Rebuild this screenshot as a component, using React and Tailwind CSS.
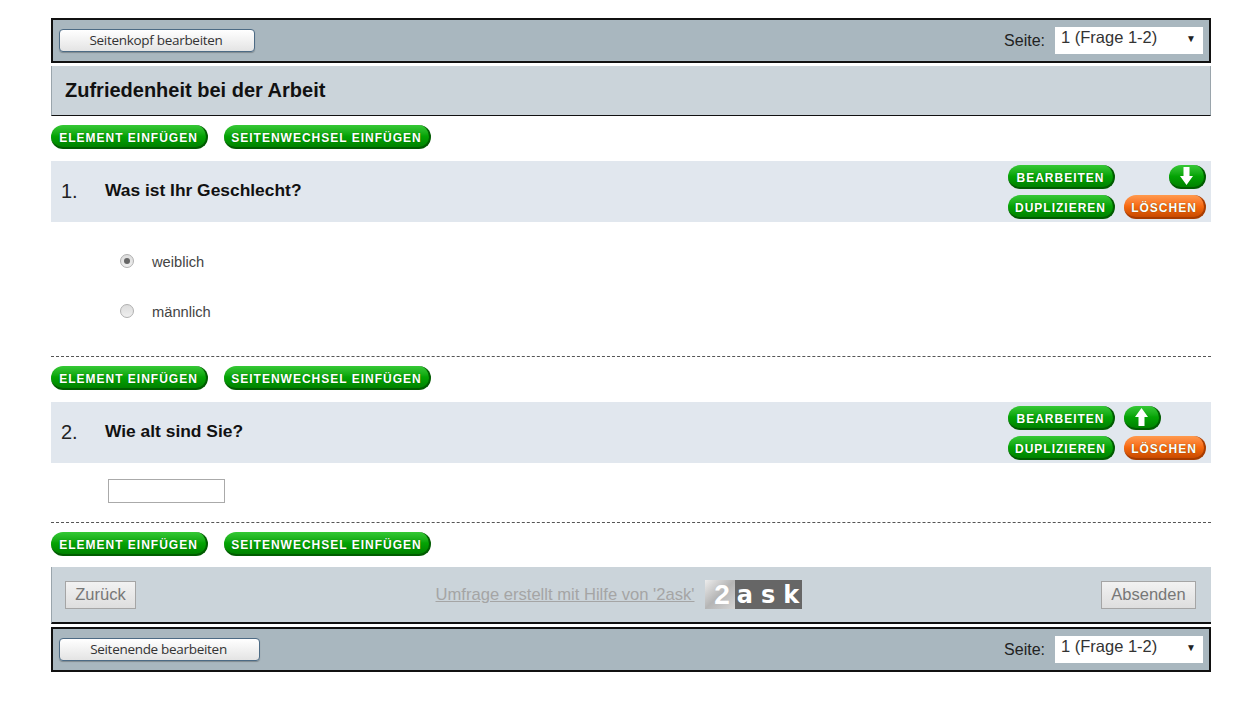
import React from 'react';

const sans = "font-['Liberation_Sans',Arial,sans-serif]";

function Pill({ children, width, orange, textOffset = 'pt-[3px]' }) {
    const colors = orange
        ? 'bg-gradient-to-b from-[#ff9a4d] via-[#f76a10] to-[#c94a00] border-b-2 border-r-2 border-[#a83c00]'
        : 'bg-gradient-to-b from-[#35c935] via-[#04a404] to-[#008200] border-b-2 border-r-2 border-[#005c00]';
    return (
        <div
            className={`${colors} ${width} ${textOffset} h-6 rounded-full flex items-center justify-center text-white text-[12px] font-bold tracking-[1px] leading-none [text-shadow:0_0_1px_rgba(0,70,0,0.6)]`}
        >
            {children}
        </div>
    );
}

function ArrowPill({ up }) {
    return (
        <div className="w-[37px] h-6 rounded-full flex items-center justify-center bg-gradient-to-b from-[#35c935] via-[#04a404] to-[#008200] border-b-2 border-r-2 border-[#005c00]">
            <svg width="15" height="20" viewBox="0 0 15 20" className={up ? '' : 'rotate-180'}>
                <path d="M7.5 1 L14 10 L10.5 10 L10.5 19 L4.5 19 L4.5 10 L1 10 Z" fill="#fff" />
            </svg>
        </div>
    );
}

function InsertRow({ className }) {
    return (
        <div className={`flex gap-4 ${className}`}>
            <Pill width="w-[157px]">ELEMENT EINFÜGEN</Pill>
            <Pill width="w-[207px]">SEITENWECHSEL EINFÜGEN</Pill>
        </div>
    );
}

function PageBar({ label, buttonWidth, className }) {
    return (
        <div className={`h-[45px] bg-[#a9b7bf] border-2 border-[#111] flex items-center justify-between pl-[6px] pr-[6px] ${className}`}>
            <button className={`${buttonWidth} h-[23px] rounded-[4px] border border-[#4d6b85] bg-gradient-to-b from-white to-[#e4e4e4] text-[13.5px] text-[#333] font-['Open_Sans',sans-serif] tracking-[-0.3px] pr-[2px] shadow-[0_1px_1px_rgba(0,0,0,0.25)]`}>
                {label}
            </button>
            <div className="flex items-center gap-[10px]">
                <span className="text-base text-[#222] mt-[1px]">Seite:</span>
                <div className="w-[148px] h-[27px] bg-white flex justify-between items-start pl-[6px] pr-[7px] -mt-[1px] text-[16.5px] leading-[21px] text-[#333]">
                    <span>1 (Frage 1-2)</span>
                    <span className="text-[10px] leading-[15px] text-[#222] mt-[4px]">▼</span>
                </div>
            </div>
        </div>
    );
}

function QuestionHeader({ num, title, arrow }) {
    return (
        <div className="h-[61px] bg-[#e1e7ee] flex items-center justify-between pl-[10px] pr-[5px]">
            <div className="flex items-center -mt-[2px]">
                <span className="w-[44px] text-xl text-[#222]">{num}</span>
                <span className="text-[17.4px] font-bold text-[#111]">{title}</span>
            </div>
            <div className="flex flex-col gap-[6px]">
                <div className="flex justify-between w-[198px]">
                    <Pill width="w-[107px]" textOffset="pt-[4px]">BEARBEITEN</Pill>
                    <div className={arrow === 'up' ? 'mr-[45px]' : ''}>
                        <ArrowPill up={arrow === 'up'} />
                    </div>
                </div>
                <div className="flex justify-between w-[198px]">
                    <Pill width="w-[107px]" textOffset="pt-[4px]">DUPLIZIEREN</Pill>
                    <Pill width="w-[82px]" orange textOffset="pt-[4px]">LÖSCHEN</Pill>
                </div>
            </div>
        </div>
    );
}

function RadioRow({ label, checked }) {
    return (
        <div className="h-[50px] flex items-center pl-[69px]">
            <span className="w-[14px] h-[14px] rounded-full border border-[#b0b0b0] bg-gradient-to-b from-[#dcdcdc] to-[#efefef] flex items-center justify-center mb-[2px]">
                {checked && <span className="w-[6px] h-[6px] rounded-full bg-[#666]" />}
            </span>
            <span className="ml-[18px] text-[14.7px] text-[#444]">{label}</span>
        </div>
    );
}

function Logo() {
    return (
        <div className={`flex h-[29px] w-[97px] ${sans}`}>
            <div className="w-[30px] pl-[5px] bg-gradient-to-br from-[#ededed] via-[#b5b5b5] to-[#d5d5d5] flex items-center justify-center text-white text-[28px] font-bold">2</div>
            <div className="flex-1 bg-[#666] flex items-center justify-center gap-[8px] text-white leading-none font-bold font-['DejaVu_Sans',sans-serif]">
                <span className="text-[24px]">a</span>
                <span className="text-[24px]">s</span>
                <span className="text-[24px]">k</span>
            </div>
        </div>
    );
}

export default function App() {
    return (
        <div className={`w-[1251px] h-[702px] bg-white overflow-hidden ${sans}`}>
            <div className="w-[1160px] ml-[51px] pt-[18px]">
                <PageBar label="Seitenkopf bearbeiten" buttonWidth="w-[196px]" />

                <div className="h-[50px] mt-[3px] pb-[2px] bg-[#cbd4da] border-l border-r border-[#9aa5ac] border-b border-b-[#111] flex items-center pl-[13px] text-xl font-bold text-[#111]">
                    Zufriedenheit bei der Arbeit
                </div>

                <InsertRow className="mt-[9px] mb-[12px]" />

                <QuestionHeader num="1." title="Was ist Ihr Geschlecht?" arrow="down" />

                <div className="pt-[15px] h-[135px] border-b border-dashed border-[#555]">
                    <RadioRow label="weiblich" checked />
                    <RadioRow label="männlich" />
                </div>

                <InsertRow className="mt-[9px] mb-[12px]" />

                <QuestionHeader num="2." title="Wie alt sind Sie?" arrow="up" />

                <div className="h-[60px] pt-[16px] pl-[57px] border-b border-dashed border-[#555]">
                    <div className="w-[117px] h-[24px] bg-white border border-[#aaa]" />
                </div>

                <InsertRow className="mt-[9px] mb-[11px]" />

                <div className="h-[57px] bg-[#cbd4da] border-b-2 border-b-[#111] border-l border-[#9aa5ac] flex items-center justify-between pl-[13px] pr-[15px]">
                    <button className="h-[28px] w-[71px] border border-[#a5a5a5] bg-gradient-to-b from-[#f2f2f2] to-[#dedede] text-[16.5px] text-[#777]">Zurück</button>
                    <div className="flex items-center gap-[10px]">
                        <a className="text-[16.6px] text-[#a5a5a5] underline mt-[2px]">Umfrage erstellt mit Hilfe von '2ask'</a>
                        <Logo />
                    </div>
                    <button className="h-[28px] w-[95px] border border-[#a5a5a5] bg-gradient-to-b from-[#f2f2f2] to-[#dedede] text-[16.5px] text-[#777]">Absenden</button>
                </div>

                <PageBar label="Seitenende bearbeiten" buttonWidth="w-[201px]" className="mt-[3px]" />
            </div>
        </div>
    );
}
